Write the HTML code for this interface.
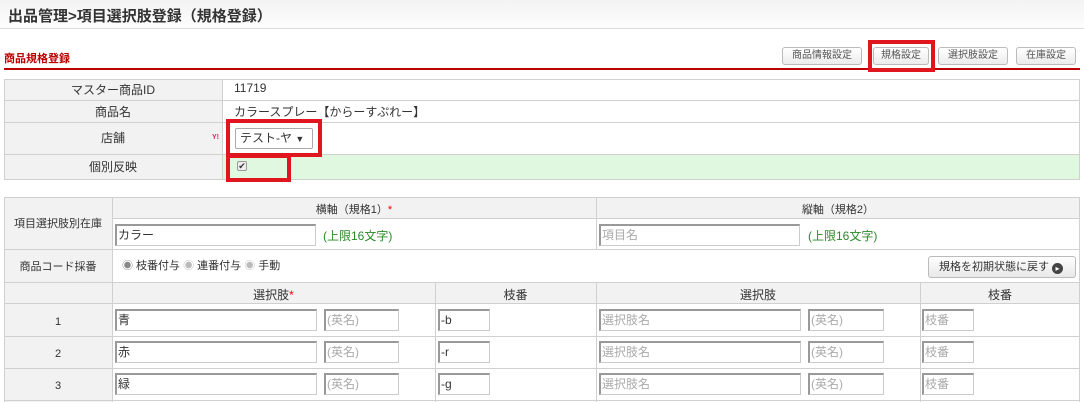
<!DOCTYPE html>
<html><head><meta charset="utf-8"><style>
*{margin:0;padding:0;box-sizing:border-box}
body{width:1084px;height:402px;overflow:hidden;background:#fff;font-family:"Liberation Sans","Noto Sans CJK JP",sans-serif;font-size:12px;color:#333;position:relative}
.a{position:absolute}
.hdr{left:0;top:0;width:1084px;height:29px;background:linear-gradient(#f3f3f3,#fdfdfd);border-bottom:1px solid #ddd}
.btn{position:absolute;top:47px;height:18px;border:1px solid #bbb;border-radius:3px;background:linear-gradient(#fff,#ececec);font-size:10px;color:#555;text-align:center;line-height:16px}
.red{position:absolute;border:4px solid #e0161e}
.ln{position:absolute;background:#d0d0d0}
.lbl{position:absolute;background:#f2f2f2;text-align:center}
.inp{position:absolute;height:22px;border:1px solid #ccc;border-top:2px solid #999;border-left:2px solid #999;background:#fff;font-size:12px;line-height:18px;padding-left:1px;color:#333}
.ph{color:#aaa}
.g{position:absolute;color:#2a8a2a;font-size:12px}
.c{position:absolute;text-align:center}
</style></head><body>
<div class="a hdr"></div>
<div class="a" style="left:8px;top:5px;font-size:15px;font-weight:bold;color:#333">出品管理&gt;項目選択肢登録（規格登録）</div>
<div class="a" style="left:4px;top:50px;font-size:11px;font-weight:bold;color:#b00">商品規格登録</div>
<div class="a" style="left:4px;top:68px;width:1076px;height:2px;background:#b00"></div>
<div class="btn" style="left:782px;width:80px">商品情報設定</div>
<div class="btn" style="left:873px;width:56px">規格設定</div>
<div class="btn" style="left:938px;width:70px">選択肢設定</div>
<div class="btn" style="left:1016px;width:60px">在庫設定</div>
<div class="red" style="left:868px;top:40px;width:67px;height:32px"></div>

<!-- table 1 -->
<div class="lbl" style="left:4px;top:79px;width:218px;height:100px"></div>
<div class="a" style="left:222px;top:154px;width:858px;height:25px;background:#e0f8e0"></div>
<div class="ln" style="left:4px;top:79px;width:1076px;height:1px"></div>
<div class="ln" style="left:4px;top:100px;width:1076px;height:1px"></div>
<div class="ln" style="left:4px;top:122px;width:1076px;height:1px"></div>
<div class="ln" style="left:4px;top:154px;width:1076px;height:1px"></div>
<div class="ln" style="left:4px;top:179px;width:1076px;height:1px"></div>
<div class="ln" style="left:4px;top:79px;width:1px;height:101px"></div>
<div class="ln" style="left:222px;top:79px;width:1px;height:101px"></div>
<div class="ln" style="left:1079px;top:79px;width:1px;height:101px"></div>
<div class="c" style="left:4px;top:81px;width:218px">マスター商品ID</div>
<div class="c" style="left:4px;top:103px;width:218px">商品名</div>
<div class="c" style="left:4px;top:129px;width:218px">店舗</div>
<div class="c" style="left:4px;top:158px;width:218px">個別反映</div>
<div class="a" style="left:234px;top:81px">11719</div>
<div class="a" style="left:234px;top:103px">カラースプレー【からーすぷれー】</div>
<div class="a" style="left:212px;top:134px;font-size:7px;color:#e0245e;font-weight:bold">Y!</div>
<div class="a" style="left:235px;top:128px;width:78px;height:21px;border:1px solid #aaa;border-radius:2px;background:#fff;padding-left:4px;line-height:19px">テスト-ヤ <span style="font-size:9px">▼</span></div>
<div class="a" style="left:237px;top:161px;width:10px;height:10px;border:1px solid #999;border-radius:2px;background:#eee;font-size:9px;line-height:8px;text-align:center">✔</div>
<div class="red" style="left:226px;top:119px;width:96px;height:38px"></div>
<div class="red" style="left:226px;top:154px;width:65px;height:28px"></div>

<!-- table 2 -->
<div class="lbl" style="left:4px;top:197px;width:108px;height:205px"></div>
<div class="a" style="left:112px;top:197px;width:968px;height:21px;background:#f2f2f2"></div>
<div class="a" style="left:112px;top:282px;width:968px;height:21px;background:#f2f2f2"></div>
<div class="ln" style="left:4px;top:197px;width:1076px;height:1px"></div>
<div class="ln" style="left:112px;top:218px;width:968px;height:1px"></div>
<div class="ln" style="left:4px;top:249px;width:1076px;height:1px"></div>
<div class="ln" style="left:4px;top:282px;width:1076px;height:1px"></div>
<div class="ln" style="left:4px;top:303px;width:1076px;height:1px"></div>
<div class="ln" style="left:4px;top:336px;width:1076px;height:1px"></div>
<div class="ln" style="left:4px;top:368px;width:1076px;height:1px"></div>
<div class="ln" style="left:4px;top:400px;width:1076px;height:1px"></div>
<div class="ln" style="left:4px;top:197px;width:1px;height:205px"></div>
<div class="ln" style="left:112px;top:197px;width:1px;height:205px"></div>
<div class="ln" style="left:596px;top:197px;width:1px;height:52px"></div>
<div class="ln" style="left:435px;top:282px;width:1px;height:120px"></div>
<div class="ln" style="left:596px;top:282px;width:1px;height:120px"></div>
<div class="ln" style="left:920px;top:282px;width:1px;height:120px"></div>
<div class="ln" style="left:1079px;top:197px;width:1px;height:205px"></div>

<div class="c" style="left:4px;top:215px;width:108px;font-size:11px">項目選択肢別在庫</div>
<div class="c" style="left:4px;top:258px;width:108px;font-size:11px">商品コード採番</div>
<div class="c" style="left:4px;top:316px;width:108px;font-size:11px">1</div>
<div class="c" style="left:4px;top:348px;width:108px;font-size:11px">2</div>
<div class="c" style="left:4px;top:380px;width:108px;font-size:11px">3</div>
<div class="c" style="left:112px;top:201px;width:484px;font-size:11px">横軸（規格1）<span style="color:#e00">*</span></div>
<div class="c" style="left:596px;top:201px;width:484px;font-size:11px">縦軸（規格2）</div>
<div class="inp" style="left:115px;top:224px;width:201px">カラー</div>
<div class="g" style="left:323px;top:227px">(上限16文字)</div>
<div class="inp ph" style="left:599px;top:224px;width:201px">項目名</div>
<div class="g" style="left:808px;top:227px">(上限16文字)</div>
<div class="a" style="left:122px;top:257px;font-size:11px;color:#333"><span style="color:#888">◉</span> 枝番付与 <span style="color:#bbb">◉</span> 連番付与 <span style="color:#bbb">◉</span> 手動</div>
<div class="a" style="left:928px;top:256px;width:148px;height:22px;border:1px solid #bbb;border-radius:3px;background:linear-gradient(#fff,#e8e8e8);font-size:11px;line-height:20px;padding-left:10px">規格を初期状態に戻す <span style="display:inline-block;width:11px;height:11px;border-radius:50%;background:#444;color:#fff;font-size:8px;line-height:11px;text-align:center;vertical-align:-1px">▸</span></div>
<div class="c" style="left:112px;top:286px;width:323px">選択肢<span style="color:#e00">*</span></div>
<div class="c" style="left:435px;top:286px;width:161px">枝番</div>
<div class="c" style="left:596px;top:286px;width:324px">選択肢</div>
<div class="c" style="left:920px;top:286px;width:160px">枝番</div>

<div class="inp" style="left:115px;top:309px;width:202px">青</div>
<div class="inp ph" style="left:324px;top:309px;width:75px">(英名)</div>
<div class="inp" style="left:438px;top:309px;width:52px">-b</div>
<div class="inp ph" style="left:599px;top:309px;width:202px">選択肢名</div>
<div class="inp ph" style="left:808px;top:309px;width:76px">(英名)</div>
<div class="inp ph" style="left:922px;top:309px;width:52px">枝番</div>

<div class="inp" style="left:115px;top:341px;width:202px">赤</div>
<div class="inp ph" style="left:324px;top:341px;width:75px">(英名)</div>
<div class="inp" style="left:438px;top:341px;width:52px">-r</div>
<div class="inp ph" style="left:599px;top:341px;width:202px">選択肢名</div>
<div class="inp ph" style="left:808px;top:341px;width:76px">(英名)</div>
<div class="inp ph" style="left:922px;top:341px;width:52px">枝番</div>

<div class="inp" style="left:115px;top:373px;width:202px">緑</div>
<div class="inp ph" style="left:324px;top:373px;width:75px">(英名)</div>
<div class="inp" style="left:438px;top:373px;width:52px">-g</div>
<div class="inp ph" style="left:599px;top:373px;width:202px">選択肢名</div>
<div class="inp ph" style="left:808px;top:373px;width:76px">(英名)</div>
<div class="inp ph" style="left:922px;top:373px;width:52px">枝番</div>
</body></html>
